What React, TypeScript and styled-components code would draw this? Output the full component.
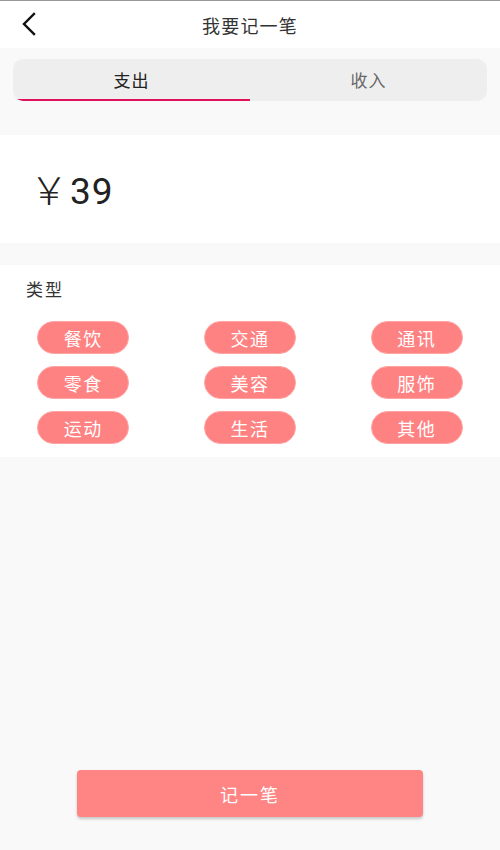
import React, { useState } from "react";
import styled, { createGlobalStyle } from "styled-components";

const Global = createGlobalStyle`
  html, body { margin: 0; padding: 0; background: #f9f9f9; }
  body { font-family: "Noto Sans CJK SC", "Noto Sans", sans-serif; }
  * { box-sizing: border-box; }
`;

const Page = styled.div`
  min-height: 850px;
  display: flex;
  flex-direction: column;
  background: #f9f9f9;
  border-top: 1px solid #999;
`;

const Header = styled.div`
  height: 47px;
  background: #fff;
  display: flex;
  align-items: center;
  justify-content: center;
  position: relative;
`;

const Back = styled.button`
  position: absolute;
  left: 16px;
  top: 9px;
  width: 26px;
  height: 28px;
  border: none;
  background: transparent;
  padding: 0;
  display: flex;
  align-items: center;
  justify-content: center;
`;

const Title = styled.div`
  font-size: 18px;
  color: #333;
  letter-spacing: 1.2px;
`;

const TabWrap = styled.div`
  padding: 11px 13px 0;
`;

const TabBar = styled.div`
  height: 42px;
  background: #eeeeee;
  border-radius: 10px;
  display: flex;
  overflow: hidden;
`;

const Tab = styled.div<{ $active: boolean }>`
  flex: 1;
  display: flex;
  align-items: center;
  justify-content: center;
  font-size: 17px;
  letter-spacing: 1px;
  color: ${(p) => (p.$active ? "#222" : "#666")};
  border-bottom: 2px solid ${(p) => (p.$active ? "#e0115a" : "transparent")};
`;

const AmountCard = styled.div`
  margin-top: 34px;
  height: 108px;
  background: #fff;
  display: flex;
  align-items: center;
  padding-left: 30px;
  color: #222;
`;

const AmountLine = styled.div`
  display: flex;
  align-items: baseline;
  margin-top: -4px;
`;

const Yen = styled.span`
  font-family: "Noto Sans CJK SC", sans-serif;
  font-size: 38px;
  font-weight: 300;
  margin-right: 2px;
`;

const Amount = styled.span`
  font-family: Roboto, "Noto Sans", sans-serif;
  font-size: 37px;
  letter-spacing: 1px;
`;

const TypeCard = styled.div`
  margin-top: 22px;
  background: #fff;
  padding: 12px 0 13px;
`;

const TypeLabel = styled.div`
  padding-left: 26px;
  font-size: 17px;
  color: #333;
  letter-spacing: 2px;
  line-height: 24px;
`;

const Grid = styled.div`
  margin-top: 20px;
  display: grid;
  grid-template-columns: repeat(3, 1fr);
  row-gap: 12px;
  justify-items: center;
`;

const Chip = styled.div`
  width: 92px;
  height: 33px;
  border-radius: 17px;
  background: #ff8282;
  border: 1px solid #ffa3a3;
  color: #fff;
  font-size: 18px;
  letter-spacing: 1.5px;
  display: flex;
  align-items: center;
  justify-content: center;
`;

const Footer = styled.div`
  margin-top: auto;
  padding: 0 77px 33px;
`;

const Submit = styled.button`
  width: 100%;
  height: 47px;
  border: none;
  border-radius: 4px;
  background: #ff8484;
  color: #fff;
  font-family: inherit;
  font-size: 18px;
  letter-spacing: 2px;
  box-shadow: 0 2px 3px rgba(0, 0, 0, 0.2);
`;

const types = ["餐饮", "交通", "通讯", "零食", "美容", "服饰", "运动", "生活", "其他"];

export default function App() {
  const [tab, setTab] = useState(0);
  return (
    <>
      <Global />
      <Page>
        <Header>
          <Back aria-label="back">
            <svg width="16" height="24" viewBox="0 0 16 24" fill="none">
              <path d="M13 2 L3 12 L13 22" stroke="#111" strokeWidth="2.4" strokeLinecap="square" />
            </svg>
          </Back>
          <Title>我要记一笔</Title>
        </Header>
        <TabWrap>
          <TabBar>
            <Tab $active={tab === 0} onClick={() => setTab(0)}>支出</Tab>
            <Tab $active={tab === 1} onClick={() => setTab(1)}>收入</Tab>
          </TabBar>
        </TabWrap>
        <AmountCard>
          <AmountLine>
            <Yen>￥</Yen>
            <Amount>39</Amount>
          </AmountLine>
        </AmountCard>
        <TypeCard>
          <TypeLabel>类型</TypeLabel>
          <Grid>
            {types.map((t) => (
              <Chip key={t}>{t}</Chip>
            ))}
          </Grid>
        </TypeCard>
        <Footer>
          <Submit>记一笔</Submit>
        </Footer>
      </Page>
    </>
  );
}
